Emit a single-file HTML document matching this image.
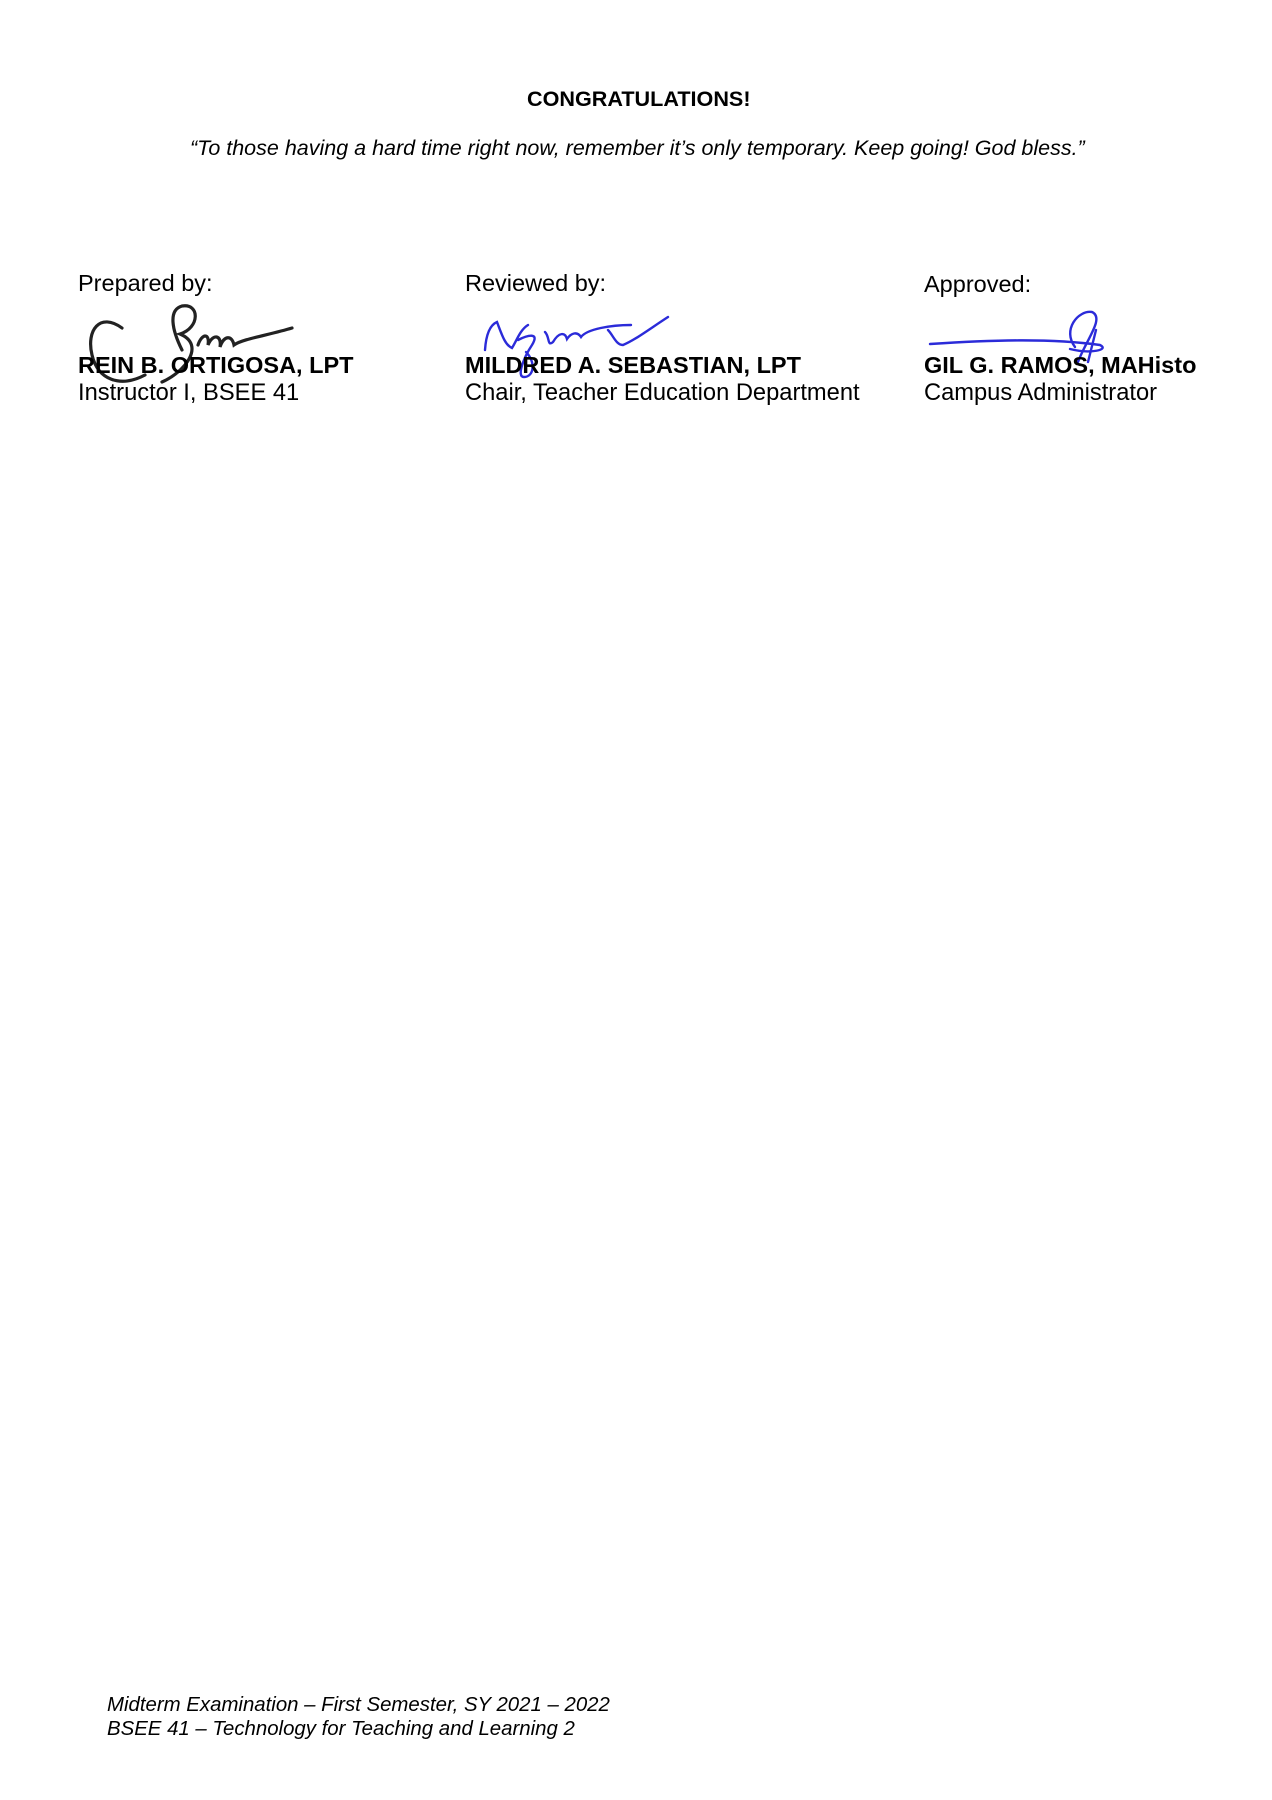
<!DOCTYPE html>
<html><head><meta charset="utf-8"><style>
html,body{margin:0;padding:0;background:#fff;}
body{width:1272px;height:1800px;position:relative;font-family:"Liberation Sans",Arial,sans-serif;color:#000;overflow:hidden;}
.a{position:absolute;white-space:nowrap;line-height:1;}
.h{font-size:23.5px;}
.b{font-weight:bold;font-size:23.5px;}
.s{font-size:23.7px;}
</style></head><body>
<div class="a" style="left:527px;top:88px;font-weight:bold;font-size:21.6px;">CONGRATULATIONS!</div>
<div class="a" style="left:190px;top:138px;font-style:italic;font-size:21.5px;">“To those having a hard time right now, remember it’s only temporary. Keep going! God bless.”</div>

<div class="a h" style="left:78px;top:272px;">Prepared by:</div>
<div class="a h" style="left:465px;top:272px;">Reviewed by:</div>
<div class="a h" style="left:924px;top:273px;">Approved:</div>

<svg style="position:absolute;left:0;top:0" width="1272" height="500">
<g fill="none" stroke="#222" stroke-width="3.2" stroke-linecap="round">
<path d="M122 328 C100 312 86 330 92 355 C98 380 120 388 145 375"/>
<path d="M182 350 C172 330 168 310 182 306 C200 303 200 328 180 334 C206 345 185 372 162 382"/>
<path d="M198 345 c4 -12 12 -12 10 0 c5 -12 14 -10 12 2 c4 -12 12 -12 14 -2 c8 -6 35 -10 58 -17"/>
</g>
<g fill="none" stroke="#2b2bd9" stroke-width="2.4" stroke-linecap="round">
<path d="M485 350 C486 335 490 325 497 322 C502 335 505 345 512 348 C517 340 520 330 528 325"/>
<path d="M518 340 c10 -5 22 -8 14 5 c-8 12 -16 32 -8 32 c10 0 12 -15 2 -25"/>
<path d="M545 332 c5 5 2 15 8 10 c6 -10 12 -10 14 -3 c4 -6 10 -8 14 -2 c6 -8 30 -12 50 -12 M608 330 c5 5 8 15 15 15 c12 -5 25 -15 45 -28"/>
<path d="M930 344 C990 340 1050 338 1100 345 C1110 350 1090 354 1070 349"/>
<path d="M1075 347 C1062 330 1078 310 1092 312 C1105 318 1086 340 1078 362 M1096 330 l-8 32"/>
</g>
</svg>

<div class="a b" style="left:78px;top:354px;">REIN B. ORTIGOSA, LPT</div>
<div class="a b" style="left:465px;top:354px;">MILDRED A. SEBASTIAN, LPT</div>
<div class="a b" style="left:924px;top:354px;">GIL G. RAMOS, MAHisto</div>
<div class="a s" style="left:78px;top:382px;">Instructor I, BSEE 41</div>
<div class="a s" style="left:465px;top:382px;">Chair, Teacher Education Department</div>
<div class="a s" style="left:924px;top:382px;">Campus Administrator</div>

<div class="a" style="left:107px;top:1694px;font-style:italic;font-size:20.4px;line-height:23.5px;">Midterm Examination – First Semester, SY 2021 – 2022<br>BSEE 41 – Technology for Teaching and Learning 2</div>
</body></html>
